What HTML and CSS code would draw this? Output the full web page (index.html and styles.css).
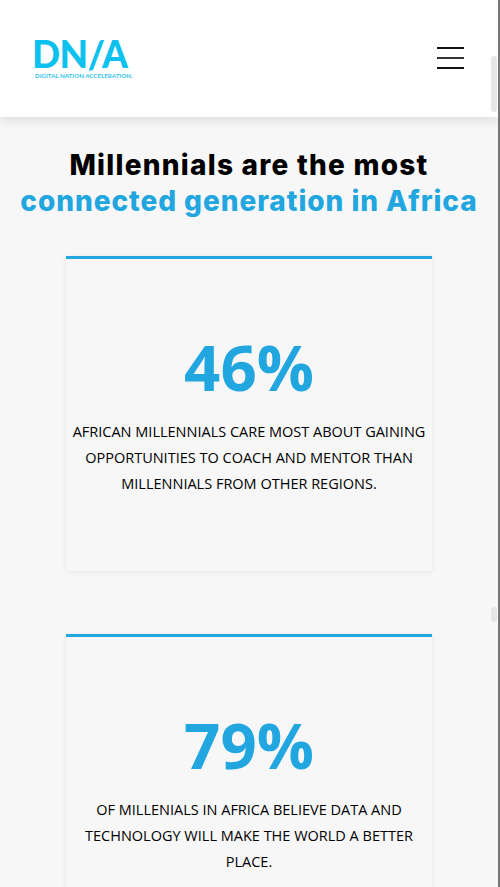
FILE: index.html
```html
<!DOCTYPE html>
<html lang="en">
<head>
<meta charset="utf-8">
<title>DNA</title>
<link rel="stylesheet" href="styles.css">
</head>
<body>
<div class="page">
  <header class="header">
    <div class="logo">
      <div class="logo-mark">DN/A</div>
      <div class="logo-sub">DIGITAL NATION ACCELERATION.</div>
    </div>
    <svg class="burger" width="28" height="24" viewBox="0 0 28 24" aria-label="Menu">
      <rect x="1" y="0" width="27" height="2" fill="#111"/>
      <rect x="1" y="10" width="27" height="2" fill="#333"/>
      <rect x="1" y="20" width="27" height="2" fill="#111"/>
    </svg>
  </header>
  <main class="main">
    <h1 class="title">Millennials are the most<span class="title-accent">connected generation in Africa</span></h1>
    <section class="card">
      <div class="num">46%</div>
      <p class="text">AFRICAN MILLENNIALS CARE MOST ABOUT GAINING OPPORTUNITIES TO COACH AND MENTOR THAN MILLENNIALS FROM OTHER REGIONS.</p>
    </section>
    <section class="card">
      <div class="num">79%</div>
      <p class="text">OF MILLENIALS IN AFRICA BELIEVE DATA AND TECHNOLOGY WILL MAKE THE WORLD A BETTER PLACE.</p>
    </section>
  </main>
  <div class="thumb thumb-top"></div>
  <div class="thumb thumb-mid"></div>
  <div class="edge"></div>
</div>
</body>
</html>
```
FILE: styles.css
```css
* { box-sizing: border-box; }
html, body { margin: 0; height: 887px; overflow: hidden; background: #f7f7f7; }
.page { position: relative; width: 500px; height: 887px; overflow: hidden; }
.header {
  height: 117px; background: #fff; box-shadow: 0 2px 12px rgba(0,0,0,.13);
  display: flex; align-items: center; justify-content: space-between;
  padding: 0 36px 0 32px; position: relative;
}
.logo { width: 100px; margin-top: 2px; }
.logo-mark {
  font-family: "Lato", sans-serif; font-weight: 900; font-size: 37px; line-height: 30px;
  color: #0dc1ef; letter-spacing: -.7px; white-space: nowrap;
}
.logo-sub {
  font-family: "Lato", sans-serif; font-size: 6.2px; line-height: 8px; margin: 3px 0 0 3px;
  color: #35c4ec; white-space: nowrap; font-weight: 700;
}
.burger { display: block; }
.main { padding: 30px 2px 0 0; }
.title {
  margin: 0; text-align: center; font-family: "Inter", sans-serif; font-weight: 800;
  font-size: 28px; line-height: 36px; color: #000; letter-spacing: 1.25px;
}
.title-accent { display: block; color: #21a6e0; letter-spacing: .95px; }
.card {
  width: 366px; height: 315px; margin: 37px 0 63px 66px; padding: 73px 4px 0;
  background: #f7f7f7; border-top: 3px solid #21a6e0;
  box-shadow: 0 1px 6px rgba(0,0,0,.07); text-align: center;
}
.num {
  font-family: "Open Sans", sans-serif; font-weight: 700; font-size: 63.5px; line-height: 70px; color: #21a6e0;
}
.text {
  margin: 17px 0 0; font-family: "Open Sans", sans-serif; font-size: 14.5px; line-height: 26px; color: #000;
}
.thumb { position: absolute; left: 491px; width: 6px; background: #e6e6e6; border-radius: 3px; }
.thumb-top { top: 56px; height: 56px; }
.thumb-mid { top: 607px; height: 15px; }
.edge { position: absolute; top: 0; right: 0; width: 2px; height: 887px; background: #777; }
```
